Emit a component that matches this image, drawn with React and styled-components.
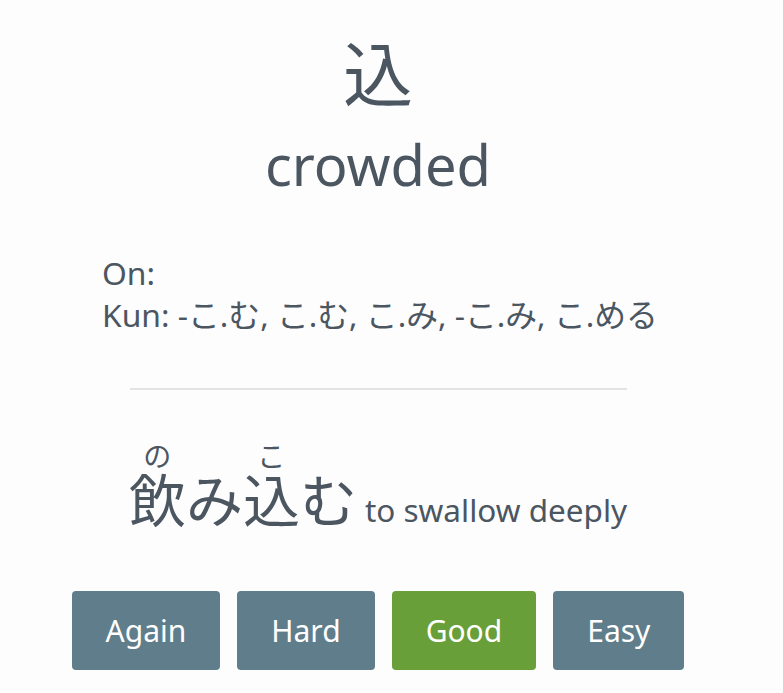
import styled, { createGlobalStyle } from "styled-components";

const GlobalStyle = createGlobalStyle`
  body {
    margin: 0;
    background: #fdfdfe;
    font-family: "Noto Sans", "Open Sans", "Noto Sans CJK JP", sans-serif;
    color: #4b5661;
  }
`;

const Page = styled.div`
  width: 756px;
  display: flex;
  flex-direction: column;
  align-items: center;
  padding-top: 24px;
`;

const Kanji = styled.div`
  font-family: "Noto Sans CJK JP", sans-serif;
  font-size: 70px;
  line-height: 94px;
`;

const Meaning = styled.div`
  margin-top: 8px;
  font-size: 56px;
  line-height: 76px;
`;

const Readings = styled.div`
  align-self: flex-start;
  margin: 50px 0 0 102px;
  font-size: 31.8px;
  line-height: 42px;
  font-family: "Noto Sans", "Noto Sans CJK JP", sans-serif;
`;

const Rule = styled.hr`
  width: 497px;
  margin: 52px 0 0;
  border: none;
  border-top: 2px solid #e2e3e5;
`;

const Example = styled.div`
  margin-top: 52px;
  display: flex;
  align-items: baseline;
  gap: 8px;
`;

const Word = styled.span`
  font-family: "Noto Sans CJK JP", sans-serif;
  font-size: 57px;

  rt {
    font-size: 28px;
    line-height: 1.1;
  }
`;

const Gloss = styled.span`
  font-size: 31.5px;
`;

const Buttons = styled.div`
  display: flex;
  gap: 17px;
  margin-top: 53px;
`;

const Answer = styled.button`
  height: 79px;
  padding: 0 34px;
  border: none;
  border-radius: 4px;
  background: ${(p) => (p.good ? "#689f38" : "#607d8b")};
  color: #fff;
  font-family: "Noto Sans", "Open Sans", sans-serif;
  font-size: 30px;
  cursor: pointer;
`;

export default function App() {
  const kun = ["-こ.む", "こ.む", "こ.み", "-こ.み", "こ.める"];
  const answers = ["Again", "Hard", "Good", "Easy"];

  return (
    <>
      <GlobalStyle />
      <Page>
        <Kanji>込</Kanji>
        <Meaning>crowded</Meaning>
        <Readings>
          <div>On:</div>
          <div>Kun: {kun.join(", ")}</div>
        </Readings>
        <Rule />
        <Example>
          <Word>
            <ruby>
              飲<rt>の</rt>
            </ruby>
            み
            <ruby>
              込<rt>こ</rt>
            </ruby>
            む
          </Word>
          <Gloss>to swallow deeply</Gloss>
        </Example>
        <Buttons>
          {answers.map((a) => (
            <Answer key={a} good={a === "Good"}>
              {a}
            </Answer>
          ))}
        </Buttons>
      </Page>
    </>
  );
}
